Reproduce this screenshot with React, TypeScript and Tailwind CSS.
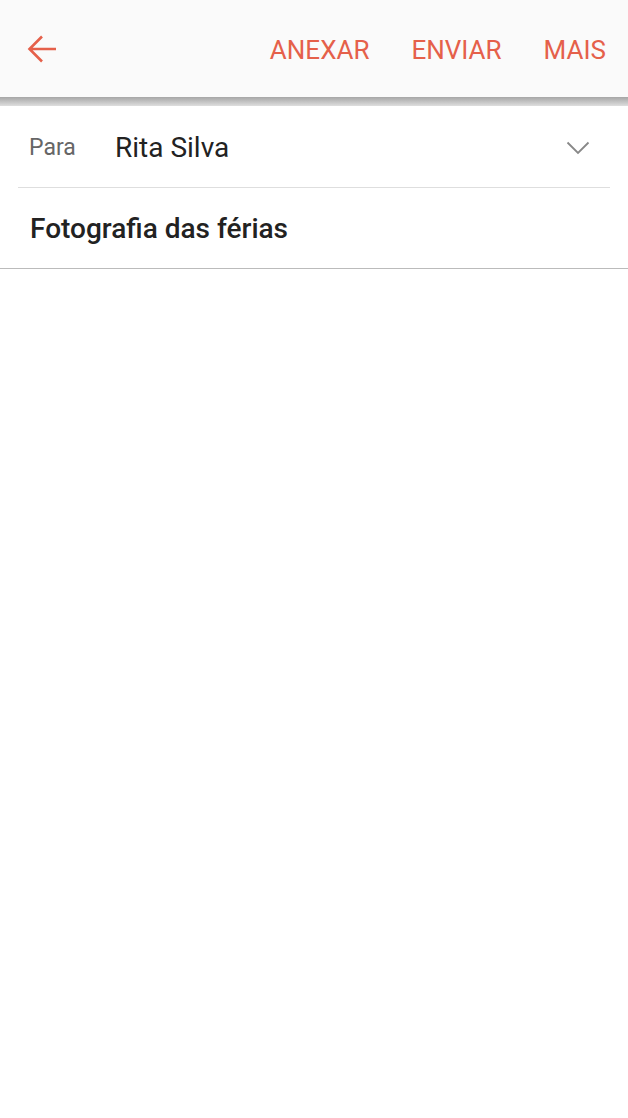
import React from "react";

export default function App() {
  return (
    <div className="w-[628px] h-[1118px] bg-white font-['Roboto',sans-serif]">
      <div className="h-[97px] bg-[#fafafa] flex items-center pl-[27px] pr-[22px]">
        <svg width="30" height="30" viewBox="0 0 30 30" fill="none" className="mt-[1px]">
          <path d="M29 15H3M15 2.5L2.5 15L15 27.5" stroke="#e5604a" strokeWidth="2.6" strokeLinecap="butt" />
        </svg>
        <div className="ml-auto mt-[3px] flex items-center gap-[42px] text-[26px] text-[#e5604a] leading-none">
          <span>ANEXAR</span>
          <span>ENVIAR</span>
          <span>MAIS</span>
        </div>
      </div>
      <div className="h-[9px] bg-gradient-to-b from-[#a6a6a6] to-[#dedede]" />
      <div className="h-[81px] flex items-center pl-[29px] pr-[38px] pt-[3px]">
        <span className="text-[23px] text-[#666] w-[86px]">Para</span>
        <span className="text-[28px] text-[#222]">Rita Silva</span>
        <svg width="24" height="14" viewBox="0 0 24 14" fill="none" className="ml-auto">
          <path d="M1.5 1.5L12 12L22.5 1.5" stroke="#888" strokeWidth="1.8" />
        </svg>
      </div>
      <div className="mx-[18px] h-px bg-[#dedede]" />
      <div className="h-[80px] flex items-center pl-[30px] pt-[2px]">
        <span className="text-[28px] font-medium text-[#222]">Fotografia das férias</span>
      </div>
      <div className="h-px bg-[#bbbbbb]" />
    </div>
  );
}
